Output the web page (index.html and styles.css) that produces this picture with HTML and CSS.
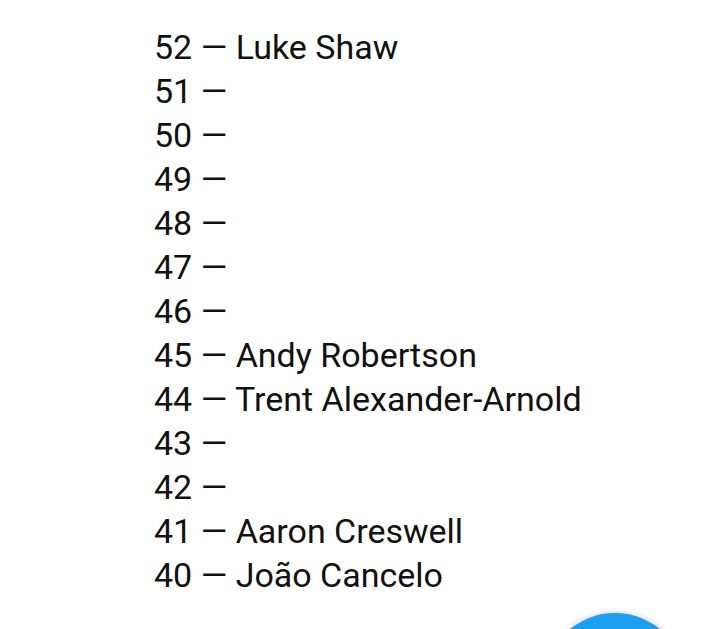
FILE: index.html
```html
<!DOCTYPE html>
<html>
<head>
<meta charset="utf-8">
<link rel="stylesheet" href="styles.css">
</head>
<body>
<div class="page">
  <ul class="list">
    <li>52 — Luke Shaw</li>
    <li>51 —</li>
    <li>50 —</li>
    <li>49 —</li>
    <li>48 —</li>
    <li>47 —</li>
    <li>46 —</li>
    <li>45 — Andy Robertson</li>
    <li>44 — Trent Alexander-Arnold</li>
    <li>43 —</li>
    <li>42 —</li>
    <li>41 — Aaron Creswell</li>
    <li>40 — João Cancelo</li>
  </ul>
  <div class="fab"></div>
</div>
</body>
</html>
```
FILE: styles.css
```css
html, body {
  margin: 0;
  padding: 0;
  background: #fff;
}
.page {
  position: relative;
  width: 720px;
  height: 629px;
  overflow: hidden;
}
.list {
  list-style: none;
  margin: 0;
  padding: 25px 0 0 154px;
  font-family: Roboto, "Noto Sans", sans-serif;
  font-size: 34px;
  line-height: 44px;
  color: #111;
}
.fab {
  position: absolute;
  left: 544px;
  top: 613px;
  width: 142px;
  height: 142px;
  border-radius: 50%;
  background: #1d9ff0;
  box-shadow: 0 0 6px rgba(0,0,0,0.22);
}
```
